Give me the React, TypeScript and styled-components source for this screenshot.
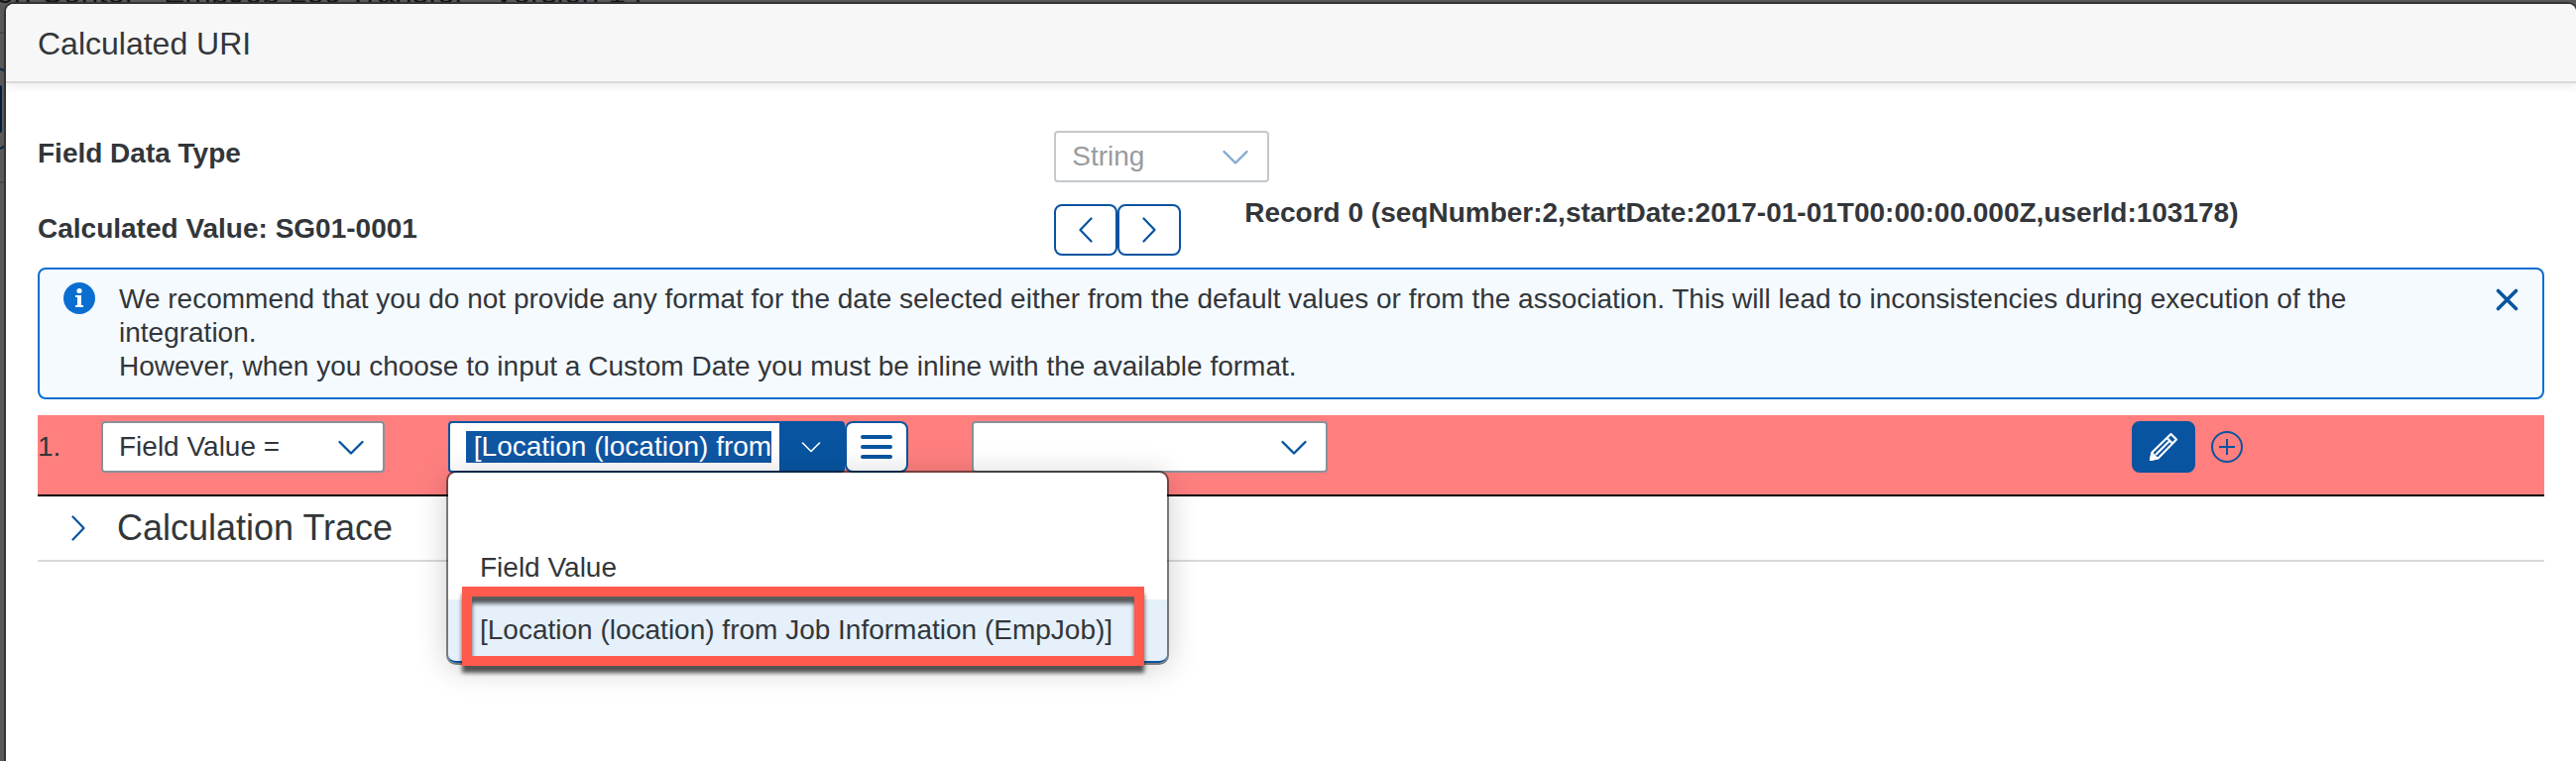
import React, { useEffect, useRef } from "react";
import styled, { createGlobalStyle } from "styled-components";

const blue = "#0854a0";
const ink = "#32363a";

const GlobalStyle = createGlobalStyle`
  *, *::before, *::after { box-sizing: border-box; }
  body {
    margin: 0;
    overflow: hidden;
    background: #5a5959;
    color: ${ink};
    font: 400 28px/34px "Liberation Sans", Arial, sans-serif;
  }
  button, input, select { font: inherit; color: inherit; margin: 0; }
  button { cursor: pointer; padding: 0; }
  svg { display: block; flex: none; }
`;

const Page = styled.div`
  min-height: 100vh;
  display: flex;
  flex-direction: column;
`;

const BackgroundTitle = styled.div`
  height: 4px;
  overflow: hidden;
  display: flex;
  align-items: flex-end;
  color: #141618;
  font-size: 32px;
  line-height: 24px;
  white-space: nowrap;
  text-indent: -4px;
`;

const Columns = styled.div`
  flex: 1;
  display: flex;
`;

const Gutter = styled.div`
  flex: 0 0 6px;
`;

const Dialog = styled.section`
  flex: 1;
  min-width: 0;
  background: #fff;
  border-radius: 8px 8px 0 0;
  box-shadow: 0 0 0 2px #353535;
`;

const DialogHeader = styled.header`
  height: 80px;
  padding: 2px 32px 0;
  display: flex;
  align-items: center;
  background: #f7f7f7;
  border-bottom: 2px solid #d9d9d9;
  border-radius: 8px 8px 0 0;
  box-shadow: 0 4px 8px rgba(0, 0, 0, 0.07);
`;

const DialogTitle = styled.h1`
  margin: 0;
  font-size: 32px;
  font-weight: 400;
`;

const DialogBody = styled.div`
  padding: 48px 32px 0;
`;

const FormRow = styled.div`
  display: grid;
  grid-template-columns: 73fr 107fr;
  align-items: start;
  margin-bottom: 14px;
`;

const FormLabel = styled.label`
  padding-top: 6px;
  font-weight: 700;
`;

const ValueLabel = styled.div`
  padding-top: 16px;
  font-weight: 700;
`;

const RecordArea = styled.div`
  display: flex;
  align-items: flex-start;
  gap: 64px;
`;

const Navigator = styled.div`
  display: flex;
  padding-top: 8px;
`;

const RecordText = styled.strong`
  white-space: nowrap;
`;

const IconButton = styled.button<{ $filled?: boolean }>`
  width: 64px;
  height: 52px;
  flex: none;
  display: flex;
  align-items: center;
  justify-content: center;
  border: 2px solid ${blue};
  border-radius: 8px;
  background: ${(p) => (p.$filled ? blue : "#fff")};
  color: ${(p) => (p.$filled ? "#fff" : blue)};
`;

const PlainButton = styled.button`
  flex: none;
  border: 0;
  background: none;
  color: ${blue};
`;

const SelectBox = styled.div<{ $width: number; $disabled?: boolean }>`
  width: ${(p) => p.$width}px;
  flex: none;
  display: grid;
  align-items: center;
  color: ${(p) => (p.$disabled ? "#84aad0" : blue)};

  > * { grid-area: 1 / 1; }
  > svg { justify-self: end; margin-right: 20px; margin-top: 2px; pointer-events: none; }
`;

const NativeSelect = styled.select`
  appearance: none;
  width: 100%;
  height: 52px;
  padding: 0 56px 0 16px;
  border: 2px solid #89919a;
  border-radius: 4px;
  background: #fff;
  color: ${ink};
  opacity: 1;

  &:disabled { border-color: #c4c8cc; color: #999b9d; }
`;

const MessageStrip = styled.div`
  margin-top: -2px;
  padding: 13px 24px 14px;
  display: flex;
  align-items: flex-start;
  gap: 24px;
  border: 2px solid #0a6ed1;
  border-radius: 8px;
  background: #f5faff;

  > button { margin-top: 6px; }
`;

const MessageText = styled.p`
  flex: 1;
  margin: 0;
`;

const RuleRow = styled.div`
  height: 82px;
  margin-top: 16px;
  padding-top: 6px;
  display: flex;
  align-items: flex-start;
  background: #ff7f7f;
  border-bottom: 2px solid #000;
`;

const RuleNumber = styled.span`
  width: 64px;
  line-height: 52px;
`;

const ComboGroup = styled.div`
  position: relative;
  display: flex;
  margin: 0 64px;
`;

const ComboField = styled.div`
  width: 400px;
  height: 52px;
  display: flex;
  border: 2px solid ${blue};
  border-radius: 4px;
  background: #fff;
`;

const ComboInput = styled.input`
  flex: 1;
  min-width: 0;
  height: 48px;
  padding: 0;
  margin: 0 8px 0 16px;
  border: 0;
  outline: 0;
  background: #fff;

  &::selection { background: #0f56a3; color: #fff; }
`;

const ComboArrow = styled.button`
  width: 64px;
  display: flex;
  align-items: center;
  justify-content: center;
  border: 0;
  background: ${blue};
  color: #fff;
`;

const Popup = styled.ul`
  position: absolute;
  z-index: 2;
  top: 52px;
  left: 0;
  width: 725px;
  margin: 0;
  padding: 0;
  list-style: none;
  background: #fff;
  border-radius: 8px;
  box-shadow: 0 0 0 2px rgba(0, 0, 0, 0.48), 0 4px 32px rgba(0, 0, 0, 0.22);
`;

const Option = styled.li<{ $selected?: boolean }>`
  position: relative;
  height: 64px;
  padding: 0 32px;
  display: flex;
  align-items: center;
  white-space: nowrap;
  background: ${(p) => (p.$selected ? "#e5f0fa" : "transparent")};
  border-bottom: ${(p) => (p.$selected ? `2px solid ${blue}` : "0")};
  border-radius: ${(p) => (p.$selected ? "0 0 8px 8px" : "0")};
`;

const Highlight = styled.div`
  position: absolute;
  top: -13px;
  left: 14px;
  right: 23px;
  height: 80px;
  border: 10px solid #ff5a4c;
  filter: drop-shadow(0 7px 2px rgba(0, 0, 0, 0.65));
  pointer-events: none;
`;

const RowActions = styled.div`
  display: flex;
  align-items: center;
  gap: 16px;
  margin-left: auto;
  margin-right: 304px;
`;

const TracePanel = styled.div`
  border-bottom: 2px solid #d9d9d9;
`;

const TraceToggle = styled.button`
  width: 100%;
  height: 64px;
  padding-left: 34px;
  display: flex;
  align-items: center;
  gap: 32px;
  border: 0;
  background: none;
  color: ${blue};
`;

const TraceTitle = styled.span`
  color: ${ink};
  font-size: 36px;
`;

const ChevronDown = () => (
  <svg width="28" height="16" viewBox="0 0 28 16" fill="none" stroke="currentColor" strokeWidth="2.4" strokeLinecap="round" strokeLinejoin="round" aria-hidden="true">
    <path d="M2.5 2L14 13.5L25.5 2" />
  </svg>
);

const ChevronSide = ({ left }: { left?: boolean }) => (
  <svg width="14" height="26" viewBox="0 0 14 26" fill="none" stroke="currentColor" strokeWidth="2.2" strokeLinecap="round" strokeLinejoin="round" aria-hidden="true">
    <path d={left ? "M12.5 1.5L1.5 13L12.5 24.5" : "M1.5 1.5L12.5 13L1.5 24.5"} />
  </svg>
);

function Select(props: { id?: string; label?: string; width: number; value: string; disabled?: boolean }) {
  return (
    <SelectBox $width={props.width} $disabled={props.disabled}>
      <NativeSelect id={props.id} aria-label={props.label} defaultValue={props.value} disabled={props.disabled}>
        <option value={props.value}>{props.value}</option>
      </NativeSelect>
      <ChevronDown />
    </SelectBox>
  );
}

export default function App() {
  const comboRef = useRef<HTMLInputElement>(null);

  // Open with the whole value selected and its beginning in view.
  useEffect(() => {
    const input = comboRef.current;
    if (!input) return;
    input.focus();
    input.setSelectionRange(0, input.value.length, "backward");
    input.scrollLeft = 0;
    const frame = requestAnimationFrame(() => {
      input.scrollLeft = 0;
    });
    return () => cancelAnimationFrame(frame);
  }, []);

  return (
    <>
      <GlobalStyle />
      <Page>
        <BackgroundTitle>on Center - EmpJob Loc Transfer - Version 14</BackgroundTitle>
        <Columns>
          <Gutter>
            <svg width="6" height="184" viewBox="0 0 6 184" fill="none" aria-hidden="true">
              <path d="M0 29H6M0 180H6" stroke="#4a4949" strokeWidth="2" />
              <path d="M0 65.500Q3 66 6 69M0 146Q3 145 6 142" stroke="#0a2a50" strokeWidth="2" />
              <path d="M0 82Q2 82 2 85V127Q2 130 0 130Z" fill="#031f40" />
            </svg>
          </Gutter>
          <Dialog role="dialog" aria-labelledby="dialog-title">
            <DialogHeader>
              <DialogTitle id="dialog-title">Calculated URI</DialogTitle>
            </DialogHeader>
            <DialogBody>
              <FormRow>
                <FormLabel htmlFor="data-type">Field Data Type</FormLabel>
                <Select id="data-type" width={217} value="String" disabled />
              </FormRow>
              <FormRow>
                <ValueLabel>Calculated Value: SG01-0001</ValueLabel>
                <RecordArea>
                  <Navigator>
                    <IconButton aria-label="Previous record"><ChevronSide left /></IconButton>
                    <IconButton aria-label="Next record"><ChevronSide /></IconButton>
                  </Navigator>
                  <RecordText>Record 0 (seqNumber:2,startDate:2017-01-01T00:00:00.000Z,userId:103178)</RecordText>
                </RecordArea>
              </FormRow>

              <MessageStrip>
                <svg width="32" height="32" viewBox="0 0 32 32" aria-hidden="true">
                  <circle cx="16" cy="16" r="16" fill="#0a6ed1" />
                  <circle cx="16" cy="8.500" r="2.600" fill="#fff" />
                  <path d="M12 13H18V23H20V25H12V23H14V15H12Z" fill="#fff" />
                </svg>
                <MessageText>
                  We recommend that you do not provide any format for the date selected either from the default values or from the association. This will lead to inconsistencies during execution of the integration.
                  <br />
                  However, when you choose to input a Custom Date you must be inline with the available format.
                </MessageText>
                <PlainButton aria-label="Close message">
                  <svg width="23" height="23" viewBox="0 0 23 23" fill="none" stroke="currentColor" strokeWidth="3.6" strokeLinecap="round" aria-hidden="true">
                    <path d="M2.500 2.500L20.500 20.500M20.500 2.500L2.500 20.500" />
                  </svg>
                </PlainButton>
              </MessageStrip>

              <RuleRow>
                <RuleNumber>1.</RuleNumber>
                <Select label="Condition" width={286} value="Field Value =" />
                <ComboGroup>
                  <ComboField>
                    <ComboInput
                      ref={comboRef}
                      aria-label="Value source"
                      defaultValue=" [Location (location) from Job Information (EmpJob)]"
                    />
                    <ComboArrow aria-label="Open list">
                      <svg width="20" height="12" viewBox="0 0 20 12" fill="none" stroke="currentColor" strokeWidth="1.6" strokeLinecap="round" strokeLinejoin="round" aria-hidden="true">
                        <path d="M1.500 2L10 10.500L18.500 2" />
                      </svg>
                    </ComboArrow>
                  </ComboField>
                  <IconButton aria-label="More options">
                    <svg width="32" height="26" viewBox="0 0 32 26" stroke="currentColor" strokeWidth="4" strokeLinecap="round" aria-hidden="true">
                      <path d="M2 3H30M2 13H30M2 23H30" />
                    </svg>
                  </IconButton>
                  <Popup role="listbox" aria-label="Value source">
                    <Option role="option" aria-label="Empty" />
                    <Option role="option">Field Value</Option>
                    <Option role="option" aria-selected="true" $selected>
                      [Location (location) from Job Information (EmpJob)]
                      <Highlight />
                    </Option>
                  </Popup>
                </ComboGroup>
                <Select label="Format" width={359} value="" />
                <RowActions>
                  <IconButton $filled aria-label="Edit">
                    <svg width="30" height="30" viewBox="0 0 30 30" fill="none" stroke="currentColor" strokeWidth="2.2" strokeLinejoin="round" aria-hidden="true">
                      <path d="M2 28L3.500 20.500L22.500 2L28 7.500L9.500 26.500Z" />
                      <path d="M18.500 6L24 11.500M7 23L20.500 9.500" />
                      <path d="M2 28L3.500 21.500L8.500 26.500Z" fill="currentColor" />
                    </svg>
                  </IconButton>
                  <PlainButton aria-label="Add row">
                    <svg width="32" height="32" viewBox="0 0 32 32" fill="none" stroke="currentColor" strokeWidth="2" aria-hidden="true">
                      <circle cx="16" cy="16" r="15" />
                      <path d="M8 16H24M16 8V24" />
                    </svg>
                  </PlainButton>
                </RowActions>
              </RuleRow>

              <TracePanel>
                <TraceToggle aria-expanded="false">
                  <ChevronSide />
                  <TraceTitle>Calculation Trace</TraceTitle>
                </TraceToggle>
              </TracePanel>
            </DialogBody>
          </Dialog>
        </Columns>
      </Page>
    </>
  );
}
